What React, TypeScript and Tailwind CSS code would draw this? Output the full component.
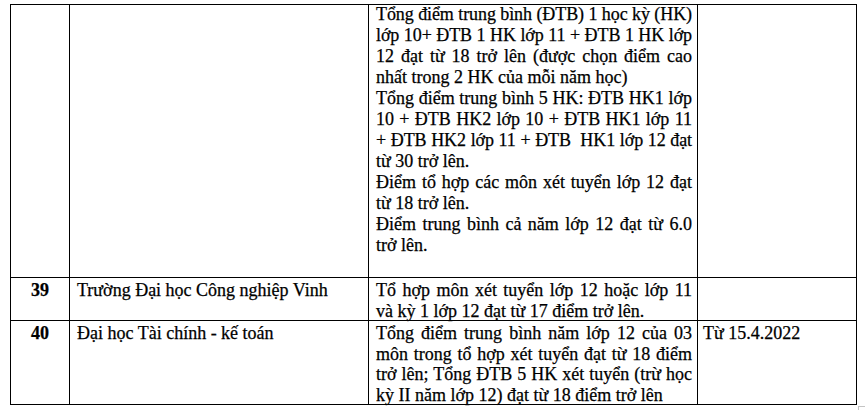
import React from "react";

function J({ children, tight }: { children: React.ReactNode; tight?: boolean }) {
  return (
    <div
      className={
        tight
          ? "whitespace-nowrap text-justify [text-align-last:justify] tracking-[-0.09px]"
          : "whitespace-nowrap text-justify [text-align-last:justify]"
      }
    >
      {children}
    </div>
  );
}

function L({ children }: { children: React.ReactNode }) {
  return <div className="whitespace-nowrap">{children}</div>;
}

export default function App() {
  return (
    <div className="min-h-[410px] w-[865px] bg-white pl-[10px] pt-[4px] text-[18px] text-black [font-family:'Liberation_Serif','Times_New_Roman',serif] [-webkit-text-stroke:0.25px_#000]">
      <div className="w-[847px] border-l border-t border-black">
        {/* Row continuation */}
        <div className="flex h-[273px]">
          <div className="w-[59px] border-b border-r border-black" />
          <div className="w-[299px] border-b border-r border-black" />
          <div className="w-[329px] border-b border-r border-black pl-[7px] pr-[5px] leading-[21px]">
            <div className="-mt-[1.5px]">
              <J tight>Tổng điểm trung bình (ĐTB) 1 học kỳ (HK)</J>
              <J tight>lớp 10+ ĐTB 1 HK lớp 11 + ĐTB 1 HK lớp</J>
              <J>12 đạt từ 18 trở lên (được chọn điểm cao</J>
              <L>nhất trong 2 HK của mỗi năm học)</L>
              <J>Tổng điểm trung bình 5 HK: ĐTB HK1 lớp</J>
              <J>10 + ĐTB HK2 lớp 10 + ĐTB HK1 lớp 11</J>
              <J tight>+ ĐTB HK2 lớp 11 + ĐTB&nbsp; HK1 lớp 12 đạt</J>
              <L>từ 30 trở lên.</L>
              <J>Điểm tổ hợp các môn xét tuyển lớp 12 đạt</J>
              <L>từ 18 trở lên.</L>
              <J>Điểm trung bình cả năm lớp 12 đạt từ 6.0</J>
              <L>trở lên.</L>
            </div>
          </div>
          <div className="w-[159px] border-b border-r border-black" />
        </div>

        {/* Row 39 */}
        <div className="flex h-[43px] leading-[20.7px]">
          <div className="w-[59px] border-b border-r border-black pt-[2px] text-center font-bold">39</div>
          <div className="w-[299px] border-b border-r border-black pl-[7px] pt-[2px]">
            Trường Đại học Công nghiệp Vinh
          </div>
          <div className="w-[329px] border-b border-r border-black pl-[7px] pr-[5px] pt-[2px]">
            <J>Tổ hợp môn xét tuyển lớp 12 hoặc lớp 11</J>
            <L>và kỳ 1 lớp 12 đạt từ 17 điểm trở lên.</L>
          </div>
          <div className="w-[159px] border-b border-r border-black" />
        </div>

        {/* Row 40 */}
        <div className="flex h-[84px] leading-[20.7px]">
          <div className="w-[59px] border-b border-r border-black pt-[2px] text-center font-bold">40</div>
          <div className="w-[299px] border-b border-r border-black pl-[7px] pt-[2px]">
            Đại học Tài chính - kế toán
          </div>
          <div className="w-[329px] border-b border-r border-black pl-[7px] pr-[5px] pt-[2px]">
            <J>Tổng điểm trung bình năm lớp 12 của 03</J>
            <J>môn trong tổ hợp xét tuyển đạt từ 18 điểm</J>
            <J>trở lên; Tổng ĐTB 5 HK xét tuyển (trừ học</J>
            <L>kỳ II năm lớp 12) đạt từ 18 điểm trở lên</L>
          </div>
          <div className="w-[159px] border-b border-r border-black pl-[5px] pt-[2px]">Từ 15.4.2022</div>
        </div>
      </div>
      <div className="ml-[848px] mt-[1px] size-[8px] border border-[#c4c4c4]" />
    </div>
  );
}
